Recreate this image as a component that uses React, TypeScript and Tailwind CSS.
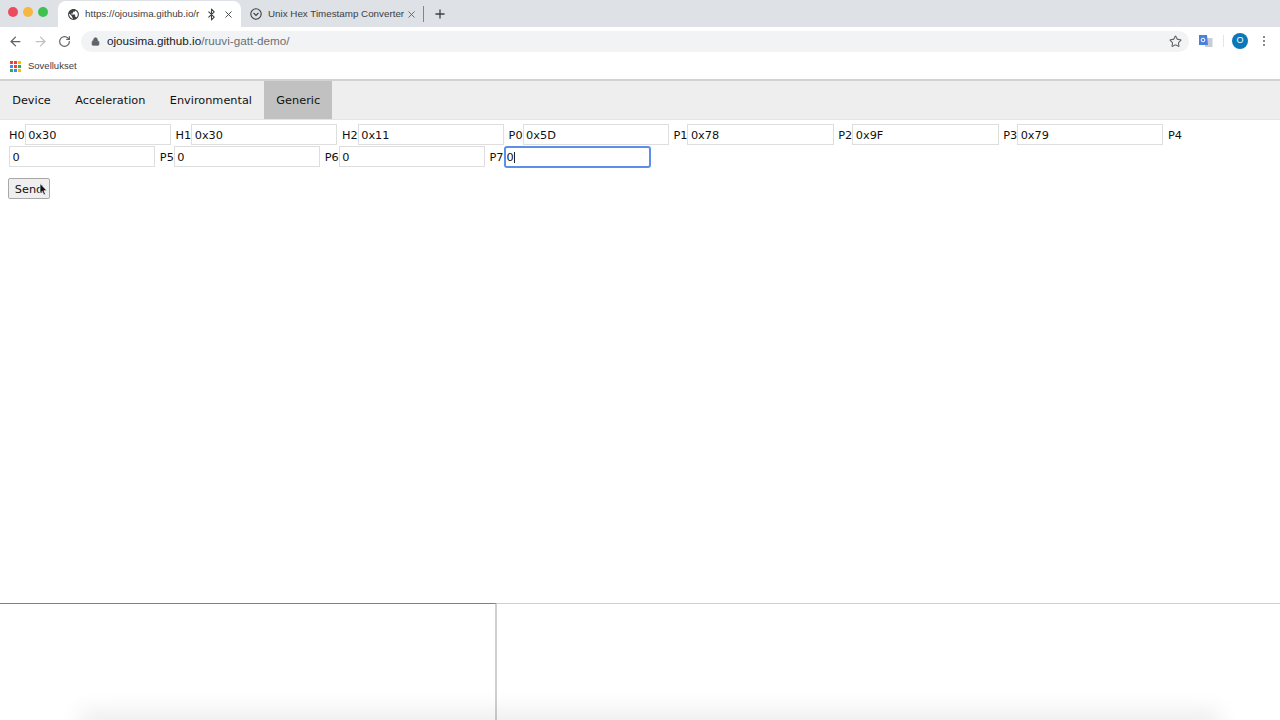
import React from "react";
import { ArrowLeft, ArrowRight, RotateCw, Lock, Star, Plus, X, Bluetooth } from "lucide-react";
import { MdPublic } from "react-icons/md";

const fields: [string, string, boolean?][] = [
  ["H0", "0x30"], ["H1", "0x30"], ["H2", "0x11"], ["P0", "0x5D"], ["P1", "0x78"], ["P2", "0x9F"], ["P3", "0x79"],
  ["P4", "0"], ["P5", "0"], ["P6", "0"], ["P7", "0", true],
];

const appColors = ["#ea4335", "#ea4335", "#fbbc04", "#4285f4", "#ea4335", "#34a853", "#34a853", "#4285f4", "#fbbc04"];

export default function App() {
  return (
    <div className="h-[720px] w-[1280px] overflow-hidden bg-white flex flex-col relative">
      {/* tab strip */}
      <div className="h-[27px] bg-[#dee1e6] flex items-end font-['Liberation_Sans',sans-serif] text-[9.8px] text-[#3c4043] shrink-0">
        <div className="w-[58px] h-[27px] flex items-start gap-[5px] pl-[8px] pt-[7px]">
          <span className="w-[10px] h-[10px] rounded-full bg-[#ed4c5c]" />
          <span className="w-[10px] h-[10px] rounded-full bg-[#f5b73f]" />
          <span className="w-[10px] h-[10px] rounded-full bg-[#3bc24f]" />
        </div>
        <div className="w-[183px] h-[26px] bg-white rounded-t-[8px] flex items-center pl-[9px] pr-[7px]">
          <MdPublic size={13} className="text-[#3c4043] shrink-0" />
          <span className="ml-[5px] w-[117px] whitespace-nowrap">https://ojousima.github.io/r</span>
          <Bluetooth size={13} className="ml-[3px] text-[#3c4043] shrink-0" />
          <X size={11} strokeWidth={2} className="ml-[5px] text-[#3c4043] shrink-0" />
        </div>
        <div className="h-[26px] flex items-center pl-[9px]">
          <svg width="12" height="12" viewBox="0 0 12 12" className="shrink-0 text-[#3c4043]">
            <circle cx="6" cy="6" r="5.2" fill="none" stroke="currentColor" strokeWidth="1.1" />
            <path d="M3.6 5l2.4 2.4L8.4 5" fill="none" stroke="currentColor" strokeWidth="1.1" />
          </svg>
          <span className="ml-[6px] w-[135px] whitespace-nowrap">Unix Hex Timestamp Converter</span>
          <X size={11} strokeWidth={2} className="ml-[3px] text-[#5f6368] shrink-0" />
          <span className="ml-[6px] w-px h-[16px] bg-[#80868b]" />
          <Plus size={14} strokeWidth={2.2} className="ml-[9px] text-[#3c4043] shrink-0" />
        </div>
      </div>

      {/* toolbar */}
      <div className="h-[27px] pt-[1px] flex items-center bg-white font-['Liberation_Sans',sans-serif] shrink-0">
        <ArrowLeft size={15} className="ml-[8px] text-[#5f6368]" />
        <ArrowRight size={15} className="ml-[10px] text-[#bdc1c6]" />
        <RotateCw size={13} strokeWidth={2.2} className="ml-[10px] text-[#5f6368]" />
        <div className="ml-[10px] w-[1108px] h-[21px] bg-[#f1f3f4] rounded-full flex items-center pl-[10px] pr-[7px] text-[11.7px]">
          <Lock size={9} fill="#5f6368" className="text-[#5f6368]" />
          <span className="ml-[7px] text-[#202124]">ojousima.github.io<span className="text-[#6b7074]">/ruuvi-gatt-demo/</span></span>
          <Star size={13} className="ml-auto text-[#5f6368]" />
        </div>
        <svg width="14" height="13" viewBox="0 0 14 13" className="ml-[10px]">
          <rect x="6" y="3" width="7.5" height="9" fill="#c9cdd3" />
          <path d="M0 0h8l1 10H0z" fill="#4a7fe0" />
          <circle cx="4" cy="5" r="1.8" fill="none" stroke="#fff" strokeWidth="1" />
        </svg>
        <span className="ml-[10px] w-px h-[12px] bg-[#e3e5e8]" />
        <span className="ml-[8px] w-[16px] h-[16px] rounded-full bg-[#0b78b8] text-white text-[9px] flex items-center justify-center">O</span>
        <div className="ml-[15px] flex flex-col gap-[2px]">
          <span className="w-[2px] h-[2px] rounded-full bg-[#5f6368]" />
          <span className="w-[2px] h-[2px] rounded-full bg-[#5f6368]" />
          <span className="w-[2px] h-[2px] rounded-full bg-[#5f6368]" />
        </div>
      </div>

      {/* bookmarks */}
      <div className="h-[25px] pb-px flex items-center pl-[10px] font-['Liberation_Sans',sans-serif] text-[9.5px] text-[#3c4043] shrink-0">
        <div className="grid grid-cols-3 gap-[1px] w-[11px]">
          {appColors.map((c, i) => (
            <span key={i} className="w-[3px] h-[3px]" style={{ background: c }} />
          ))}
        </div>
        <span className="ml-[7px]">Sovellukset</span>
      </div>

      {/* page */}
      <div className="flex-1 flex flex-col border-t-2 border-[#d2d2d2] font-['DejaVu_Sans',sans-serif] text-[11.3px] text-[#111]">
        <nav className="h-[39px] bg-[#eeeeee] flex border-b border-[#e4e4e4] shrink-0">
          {["Device", "Acceleration", "Environmental", "Generic"].map((t) => (
            <a key={t} className={`h-full flex items-center pt-[2px] px-[12.2px] ${t === "Generic" ? "bg-[#c1c1c1]" : ""}`}>
              {t}
            </a>
          ))}
        </nav>
        <form className="pl-[9px] pt-[4px] leading-[22px] h-[483px]">
          {fields.map(([l, v, focus]) => (
            <React.Fragment key={l}>
              <label className="inline-block align-top h-[22px] pt-[2px] leading-[20px]">{l}</label>
              {focus ? (
                <span className="relative inline-block align-top w-[147.25px] h-[22px]">
                  <input
                    readOnly
                    value={v}
                    className="w-full h-full pl-[1px] pt-[1px] border-2 border-[#5d8fe8] rounded-[3px] outline-none"
                  />
                  <span className="absolute left-[10px] top-[6px] w-px h-[11px] bg-[#222]" />
                </span>
              ) : (
                <input
                  readOnly
                  value={v}
                  className="w-[146.25px] h-[21px] mr-[1px] pl-[2.5px] pt-[3px] align-top border border-[#dedede] outline-none"
                />
              )}{" "}
            </React.Fragment>
          ))}
          <div className="mt-[10px]">
            <button type="button" className="block -ml-px w-[42px] h-[21px] bg-[#efefef] border border-[#a8a8a8] rounded-[2px] text-center">
              Send
            </button>
          </div>
        </form>
        <div className="flex-1 flex relative">
          <div className="w-[497px] border-t border-t-[#808080] border-r-2 border-r-[#d0d0d0]" />
          <div className="flex-1 border-t border-t-[#cfcfcf]" />
          <div className="absolute left-[90px] right-[70px] bottom-[-16px] h-[16px] shadow-[0_0_22px_10px_rgba(0,0,0,0.07)]" />
        </div>
      </div>

      {/* mouse pointer */}
      <svg width="9" height="13" viewBox="0 0 9 13" className="absolute left-[39px] top-[183px]">
        <path d="M1 0.5v10l2.3-2.2 1.6 3.6 1.6-.7-1.6-3.5H8z" fill="#111" stroke="#fff" strokeWidth=".7" />
      </svg>
    </div>
  );
}
